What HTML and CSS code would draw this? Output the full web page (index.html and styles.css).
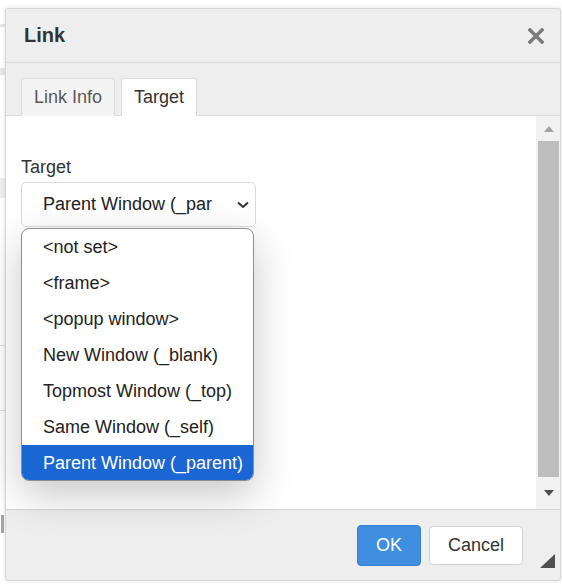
FILE: index.html
```html
<!DOCTYPE html>
<html lang="en">
<head>
    <meta charset="UTF-8">
    <meta name="viewport" content="width=device-width, initial-scale=1.0">
    <title>Link</title>
    <link rel="stylesheet" href="styles.css">
</head>
<body>

    <!-- bits of the page behind the dialog -->
    <div class="page">
        <div class="page-bit bit1"></div>
        <div class="page-bit bit2"></div>
        <div class="page-bit bit3"></div>
        <div class="page-bit bit4"></div>
        <div class="page-bit bit5"></div>
        <div class="page-bit bit6"></div>
    </div>

    <div class="dialog">
        <div class="dialog-title">
            <span>Link</span>
            <svg class="close" width="16" height="16" viewBox="0 0 16 16">
                <path d="M2 2 L14 14 M14 2 L2 14" stroke="#7a7a7a" stroke-width="3.4" stroke-linecap="square"/>
            </svg>
        </div>

        <div class="tabs">
            <div class="tab">Link Info</div>
            <div class="tab active">Target</div>
        </div>

        <div class="dialog-body">
            <div class="body-main">
                <div class="field-label">Target</div>
                <div class="select">
                    <span class="select-value">Parent Window (_parent)</span>
                    <svg class="chevron" width="12" height="8" viewBox="0 0 12 8">
                        <path d="M1 1.5 L6 6 L11 1.5" fill="none" stroke="#333" stroke-width="2"/>
                    </svg>
                </div>
            </div>
            <div class="scrollbar">
                <div class="scroll-btn"><span class="arrow-up"></span></div>
                <div class="scroll-thumb"></div>
                <div class="scroll-btn down"><span class="arrow-down"></span></div>
            </div>
        </div>

        <div class="dialog-footer">
            <button class="btn btn-ok">OK</button>
            <button class="btn">Cancel</button>
            <span class="resize"></span>
        </div>
    </div>

    <ul class="options">
        <li>&lt;not set&gt;</li>
        <li>&lt;frame&gt;</li>
        <li>&lt;popup window&gt;</li>
        <li>New Window (_blank)</li>
        <li>Topmost Window (_top)</li>
        <li>Same Window (_self)</li>
        <li class="selected">Parent Window (_parent)</li>
    </ul>

</body>
</html>
```

FILE: styles.css
```css
body {
    margin: 0;
    width: 562px;
    height: 585px;
    overflow: hidden;
    position: relative;
    background: #fff;
    font-family: "Liberation Sans", Arial, sans-serif;
    font-size: 18px;
    color: #333;
}
.page-bit {
    position: absolute;
    left: 0;
    width: 5px;
    background: #e6e6e6;
}
.bit1 { top: 24px; height: 3px; }
.bit2 { top: 68px; height: 7px; }
.bit3 { top: 178px; height: 20px; background: #ececec; }
.bit4 { top: 345px; height: 1px; background: #ddd; }
.bit5 { top: 410px; height: 1px; background: #ddd; }
.bit6 { top: 515px; height: 18px; left: 1px; width: 3px; background: #a8a8a8; }

.dialog {
    position: absolute;
    left: 5px;
    top: 8px;
    width: 556px;
    height: 573px;
    box-sizing: border-box;
    border: 1px solid #d6d6d6;
    border-radius: 3px;
    background: #eeeeee;
    display: flex;
    flex-direction: column;
    box-shadow: 0 0 4px rgba(0, 0, 0, 0.12);
}
.dialog-title {
    height: 53px;
    border-bottom: 1px solid #dcdcdc;
    display: flex;
    align-items: center;
    justify-content: space-between;
    padding: 0 16px 0 18px;
    font-size: 20px;
    font-weight: bold;
    color: #333;
}
.close {
    margin-top: 1px;
}
.tabs {
    display: flex;
    gap: 6px;
    padding: 15px 15px 0;
    height: 37px;
    border-bottom: 1px solid #dcdcdc;
}
.tab {
    height: 37px;
    line-height: 36px;
    padding: 0 12px;
    border: 1px solid #dcdcdc;
    border-bottom: none;
    border-radius: 3px 3px 0 0;
    background: #f4f4f4;
    color: #595959;
}
.tab.active {
    background: #fff;
    color: #333;
    height: 38px;
}
.dialog-body {
    height: 393px;
    background: #fff;
    display: flex;
}
.body-main {
    flex: 1;
    padding: 40px 15px 0;
}
.field-label {
    line-height: 22px;
}
.select {
    margin-top: 4px;
    width: 235px;
    height: 45px;
    box-sizing: border-box;
    border: 1px solid #dadada;
    border-radius: 5px;
    display: flex;
    align-items: center;
    padding-left: 21px;
    color: #222;
}
.select-value {
    width: 169px;
    overflow: hidden;
    white-space: nowrap;
}
.chevron {
    margin-left: 25px;
}
.scrollbar {
    width: 24px;
    background: #f1f1f1;
    display: flex;
    flex-direction: column;
}
.scroll-btn {
    height: 25px;
    display: flex;
    align-items: center;
    justify-content: center;
    padding-left: 1px;
}
.scroll-btn.down {
    height: 32px;
}
.arrow-up {
    width: 0;
    height: 0;
    border-left: 5.5px solid transparent;
    border-right: 5.5px solid transparent;
    border-bottom: 6px solid #a3a3a3;
}
.arrow-down {
    width: 0;
    height: 0;
    border-left: 5.5px solid transparent;
    border-right: 5.5px solid transparent;
    border-top: 6px solid #505050;
}
.scroll-thumb {
    flex: 1;
    margin: 0 1px 0 2px;
    background: #bdbdbd;
}
.dialog-footer {
    flex: 1;
    border-top: 1px solid #d4d4d4;
    display: flex;
    justify-content: flex-end;
    align-items: flex-start;
    gap: 8px;
    padding: 15px 37px 0 0;
    position: relative;
}
.btn {
    font-family: inherit;
    font-size: 18px;
    height: 39px;
    padding: 0 18px;
    border: 1px solid #d0d0d0;
    border-radius: 4px;
    background: #fff;
    color: #333;
    margin-top: 1px;
}
.btn-ok {
    height: 41px;
    margin-top: 0;
    width: 64px;
    background: #3f8ee0;
    border-color: #3580d2;
    color: #fff;
}
.resize {
    position: absolute;
    right: 5px;
    bottom: 12px;
    width: 0;
    height: 0;
    border-left: 15px solid transparent;
    border-bottom: 14px solid #505050;
}

.options {
    position: absolute;
    left: 21px;
    top: 228px;
    width: 233px;
    margin: 0;
    padding: 0;
    list-style: none;
    box-sizing: border-box;
    border: 1px solid #8e8e8e;
    border-radius: 8px;
    overflow: hidden;
    background: #fff;
    color: #222;
    box-shadow: 0 14px 40px rgba(0, 0, 0, 0.22);
}
.options li {
    height: 36px;
    line-height: 36px;
    padding-left: 21px;
    white-space: nowrap;
}
.options li.selected {
    height: 35px;
    background: #1a66d2;
    color: #fff;
}
```
